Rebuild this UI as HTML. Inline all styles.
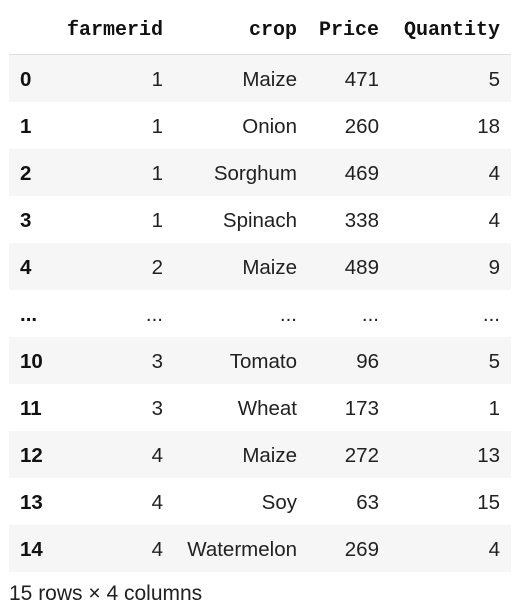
<!DOCTYPE html>
<html><head><style>
body{margin:0;width:527px;height:616px;background:#fff;font-family:"Liberation Sans",sans-serif;color:#212121;position:relative;overflow:hidden}
.r{position:absolute;left:9px;width:502px;height:47px}
.g{background:#f6f6f6}
.c{position:absolute;top:1px;line-height:47px;font-size:20.5px;white-space:nowrap}
.h{position:absolute;top:11px;line-height:40px;font-family:"Liberation Mono",monospace;font-weight:bold;font-size:20px;white-space:nowrap;color:#111}
.i{left:11px;font-weight:bold;color:#111}
.a{right:348px;text-align:right}.b{right:214px}.p{right:132px}.q{right:11px}
.line{position:absolute;left:9px;width:502px;top:54px;height:1px;background:#ddd}
.f{position:absolute;left:9px;top:582px;font-size:21px}
</style></head><body>
<div class="h" style="right:364px">farmerid</div>
<div class="h" style="right:230px">crop</div>
<div class="h" style="right:148px">Price</div>
<div class="h" style="right:27px">Quantity</div>
<div class="line"></div>
<div class="r g" style="top:55px"><span class="c i">0</span><span class="c a">1</span><span class="c b">Maize</span><span class="c p">471</span><span class="c q">5</span></div>
<div class="r" style="top:102px"><span class="c i">1</span><span class="c a">1</span><span class="c b">Onion</span><span class="c p">260</span><span class="c q">18</span></div>
<div class="r g" style="top:149px"><span class="c i">2</span><span class="c a">1</span><span class="c b">Sorghum</span><span class="c p">469</span><span class="c q">4</span></div>
<div class="r" style="top:196px"><span class="c i">3</span><span class="c a">1</span><span class="c b">Spinach</span><span class="c p">338</span><span class="c q">4</span></div>
<div class="r g" style="top:243px"><span class="c i">4</span><span class="c a">2</span><span class="c b">Maize</span><span class="c p">489</span><span class="c q">9</span></div>
<div class="r" style="top:290px"><span class="c i">...</span><span class="c a">...</span><span class="c b">...</span><span class="c p">...</span><span class="c q">...</span></div>
<div class="r g" style="top:337px"><span class="c i">10</span><span class="c a">3</span><span class="c b">Tomato</span><span class="c p">96</span><span class="c q">5</span></div>
<div class="r" style="top:384px"><span class="c i">11</span><span class="c a">3</span><span class="c b">Wheat</span><span class="c p">173</span><span class="c q">1</span></div>
<div class="r g" style="top:431px"><span class="c i">12</span><span class="c a">4</span><span class="c b">Maize</span><span class="c p">272</span><span class="c q">13</span></div>
<div class="r" style="top:478px"><span class="c i">13</span><span class="c a">4</span><span class="c b">Soy</span><span class="c p">63</span><span class="c q">15</span></div>
<div class="r g" style="top:525px"><span class="c i">14</span><span class="c a">4</span><span class="c b">Watermelon</span><span class="c p">269</span><span class="c q">4</span></div>
<div class="f">15 rows × 4 columns</div>
</body></html>
